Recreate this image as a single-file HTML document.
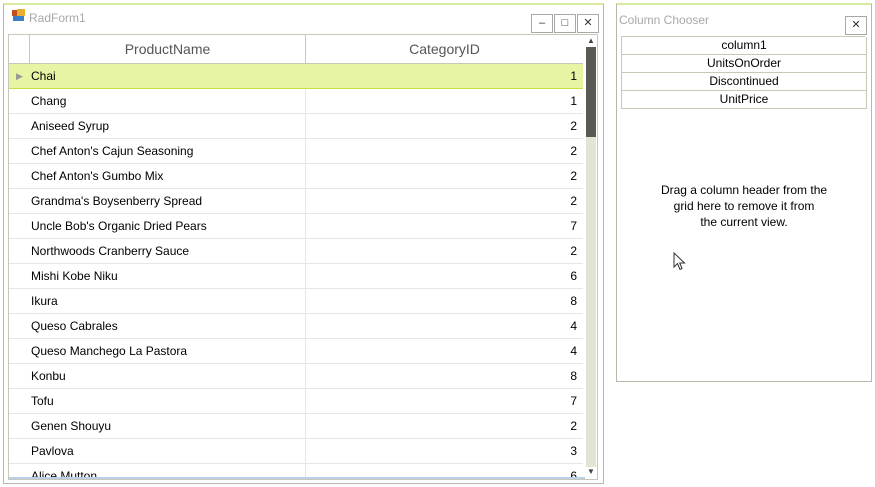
<!DOCTYPE html>
<html><head><style>
body{margin:0;width:875px;height:487px;background:#fff;position:relative;overflow:hidden;font-family:"Segoe UI","Liberation Sans",sans-serif;font-size:12px;color:#000}
.abs{position:absolute}
.form{left:3px;top:3px;width:599px;height:478px;border:1px solid #b8b8a8;border-top:2px solid #d8eaa0;}
.grid{left:8px;top:34px;width:588px;height:444px;border:1px solid #c8c8b8;overflow:hidden;background:#fff}
.hdr{position:absolute;top:0;height:28px;border-bottom:1px solid #c8c8b8;line-height:28px;text-align:center;color:#555;font-size:14px}
.row{position:absolute;left:0;width:574px;height:24px;border-bottom:1px solid #e6e6e6;line-height:24px}
.row .n{position:absolute;left:22px}
.row .v{position:absolute;right:6px}
.row .d{position:absolute;left:296px;top:0;width:1px;height:25px;background:#e6e6e6}
.btn{width:20px;height:17px;border:1px solid #a8a8a8;top:14px;background:#fff;text-align:center;font-size:11px;line-height:16px;color:#333}
.item{position:absolute;left:621px;width:244px;height:17px;border:1px solid #c8c8b8;border-top:none;text-align:center;line-height:16px}
</style></head><body>
<div class="abs form"></div>
<div class="abs" style="left:12px;top:10px;width:6px;height:6px;background:#c05020"></div>
<div class="abs" style="left:17px;top:9px;width:8px;height:7px;background:#e8b030"></div>
<div class="abs" style="left:13px;top:16px;width:11px;height:5px;background:#3a80c8"></div>
<div class="abs" style="left:29px;top:11px;color:#a8a8a8;font-size:12px">RadForm1</div>
<div class="abs btn" style="left:531px">&#8211;</div>
<div class="abs btn" style="left:554px">&#9633;</div>
<div class="abs btn" style="left:577px">&#10005;</div>
<div class="abs grid">
<div class="hdr" style="left:0;width:20px;border-right:1px solid #c8c8b8"></div>
<div class="hdr" style="left:21px;width:275px;border-right:1px solid #c8c8b8">ProductName</div>
<div class="hdr" style="left:297px;width:277px">CategoryID</div>
<div class="row" style="top:29px;background:#e6f4a4;border-bottom:1px solid #c8e040"><span class="abs" style="left:7px;top:0;color:#999;font-size:9px">&#9654;</span><span class="n">Chai</span><span class="v">1</span></div>
<div class="row" style="top:54px"><span class="n">Chang</span><span class="d"></span><span class="v">1</span></div>
<div class="row" style="top:79px"><span class="n">Aniseed Syrup</span><span class="d"></span><span class="v">2</span></div>
<div class="row" style="top:104px"><span class="n">Chef Anton's Cajun Seasoning</span><span class="d"></span><span class="v">2</span></div>
<div class="row" style="top:129px"><span class="n">Chef Anton's Gumbo Mix</span><span class="d"></span><span class="v">2</span></div>
<div class="row" style="top:154px"><span class="n">Grandma's Boysenberry Spread</span><span class="d"></span><span class="v">2</span></div>
<div class="row" style="top:179px"><span class="n">Uncle Bob's Organic Dried Pears</span><span class="d"></span><span class="v">7</span></div>
<div class="row" style="top:204px"><span class="n">Northwoods Cranberry Sauce</span><span class="d"></span><span class="v">2</span></div>
<div class="row" style="top:229px"><span class="n">Mishi Kobe Niku</span><span class="d"></span><span class="v">6</span></div>
<div class="row" style="top:254px"><span class="n">Ikura</span><span class="d"></span><span class="v">8</span></div>
<div class="row" style="top:279px"><span class="n">Queso Cabrales</span><span class="d"></span><span class="v">4</span></div>
<div class="row" style="top:304px"><span class="n">Queso Manchego La Pastora</span><span class="d"></span><span class="v">4</span></div>
<div class="row" style="top:329px"><span class="n">Konbu</span><span class="d"></span><span class="v">8</span></div>
<div class="row" style="top:354px"><span class="n">Tofu</span><span class="d"></span><span class="v">7</span></div>
<div class="row" style="top:379px"><span class="n">Genen Shouyu</span><span class="d"></span><span class="v">2</span></div>
<div class="row" style="top:404px"><span class="n">Pavlova</span><span class="d"></span><span class="v">3</span></div>
<div class="row" style="top:429px"><span class="n">Alice Mutton</span><span class="d"></span><span class="v">6</span></div>
<div class="abs" style="left:574px;top:0;width:14px;height:444px;background:#fff"></div>
<div class="abs" style="left:577px;top:12px;width:10px;height:420px;background:#e2e4d4"></div>
<div class="abs" style="left:577px;top:12px;width:10px;height:90px;background:#5a5a55"></div>
<div class="abs" style="left:578px;top:1px;font-size:8px;color:#444">&#9650;</div>
<div class="abs" style="left:578px;top:432px;font-size:8px;color:#444">&#9660;</div>
<div class="abs" style="left:0;top:442px;width:576px;height:2px;background:#b8d0e8"></div>
</div>
<div class="abs" style="left:616px;top:3px;width:254px;height:376px;border:1px solid #b8b8a8;border-top:2px solid #d8eaa0"></div>
<div class="abs" style="left:619px;top:13px;color:#a8a8a8">Column Chooser</div>
<div class="abs btn" style="left:845px;top:16px">&#10005;</div>
<div class="abs" style="left:621px;top:36px;width:244px;height:0;border-top:1px solid #c8c8b8"></div>
<div class="item" style="top:37px">column1</div>
<div class="item" style="top:55px">UnitsOnOrder</div>
<div class="item" style="top:73px">Discontinued</div>
<div class="item" style="top:91px">UnitPrice</div>
<div class="abs" style="left:634px;top:182px;width:220px;text-align:center;line-height:16px;white-space:nowrap">Drag a column header from the<br>grid here to remove it from<br>the current view.</div>
<svg class="abs" style="left:673px;top:252px" width="14" height="20" viewBox="0 0 14 20"><path d="M1 1 L1 15 L4.5 11.5 L7 17.5 L9 16.5 L6.7 11 L11.5 11 Z" fill="#fff" stroke="#333" stroke-width="1"/></svg>
</body></html>
